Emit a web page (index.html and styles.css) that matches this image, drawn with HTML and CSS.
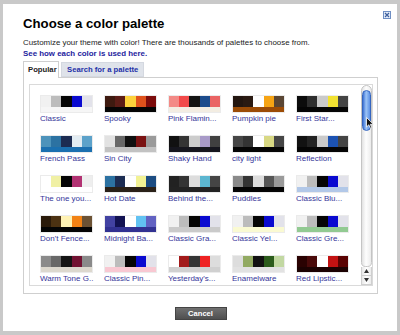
FILE: index.html
```html
<!DOCTYPE html>
<html lang="en">
<head>
  <meta charset="UTF-8">
  <meta name="viewport" content="width=device-width, initial-scale=1.0">
  <title>Choose a color palette</title>
  <link rel="stylesheet" href="styles.css">
</head>
<body>
  <div class="dialog">
    <div class="header">
      <h1 class="title">Choose a color palette</h1>
      <a class="close" href="#" title="Close">
        <svg width="8" height="8" viewBox="0 0 8 8">
          <rect x="0.5" y="0.5" width="7" height="7" fill="#e4ecf8" stroke="#6f8fc4"/>
          <path d="M2 2 L6 6 M6 2 L2 6" stroke="#3d5f9e" stroke-width="1.2"/>
        </svg>
      </a>
    </div>

    <p class="intro">
      Customize your theme with color! There are thousands of palettes to choose from.<br>
      <a href="#">See how each color is used here.</a>
    </p>

    <div class="tabs">
      <span class="tab active">Popular</span>
      <a class="tab" href="#">Search for a palette</a>
    </div>

    <div class="panel">
      <div class="list">
        <div class="grid" id="paletteGrid"></div>
        <div class="scrollbar">
          <div class="track"><div class="thumb"></div></div>
          <div class="arrow">
            <svg width="5" height="4" viewBox="0 0 5 4"><path d="M2.5 0 L5 4 L0 4 Z" fill="#333"/></svg>
          </div>
          <div class="arrow">
            <svg width="5" height="4" viewBox="0 0 5 4"><path d="M0 0 L5 0 L2.5 4 Z" fill="#333"/></svg>
          </div>
          <svg class="cursor" width="8" height="12" viewBox="0 0 8 12">
            <path d="M0.5 0.5 L0.5 10 L2.8 7.8 L4.4 11.3 L5.8 10.7 L4.3 7.3 L7.4 7.3 Z" fill="#111" stroke="#fff" stroke-width="0.8"/>
          </svg>
        </div>
      </div>
    </div>

    <div class="actions">
      <button class="cancel">Cancel</button>
    </div>
  </div>

  <script>
    const palettes = [
      ["Classic", ["#f1f1f1", "#bcbcbc", "#050505", "#0a0ad0", "#e2e2ea"], "#f6f6f6"],
      ["Spooky", ["#3e1a10", "#5c1c16", "#fdd23c", "#df521c", "#7c0c0c"], "#050505"],
      ["Pink Flamin...", ["#f38a86", "#f24a4a", "#141414", "#1d4c8c", "#ea6464"], "#f3ede2"],
      ["Pumpkin pie", ["#231610", "#2a1a12", "#ffffff", "#f6a414", "#5a4634"], "#9c4c06"],
      ["First Star...", ["#0c0c0c", "#2e2e2e", "#cacaca", "#f2e232", "#444444"], "#050505"],

      ["French Pass", ["#4d93bb", "#2c72a2", "#1c2c52", "#e2ecf2", "#5ca2ca"], "#1b70b0"],
      ["Sin City", ["#e2e2e2", "#686868", "#101010", "#7a1212", "#9a9a9a"], "#c2c2c2"],
      ["Shaky Hand", ["#111111", "#343434", "#cccccc", "#a89ac8", "#404040"], "#16161e"],
      ["city light", ["#464646", "#343434", "#ffffff", "#d8d884", "#464646"], "#050505"],
      ["Reflection", ["#121212", "#232323", "#cacaca", "#1c52b2", "#444444"], "#050505"],

      ["The one you...", ["#ffffff", "#f0f0a4", "#050505", "#b23272", "#eeeeee"], "#ffffff"],
      ["Hot Date", ["#2c72a2", "#1c2c52", "#ffffff", "#f2f294", "#1c4c82"], "#2a2118"],
      ["Behind the...", ["#222222", "#343434", "#dddddd", "#5cb6d0", "#454545"], "#232323"],
      ["Puddles", ["#8a8a8a", "#343434", "#dddddd", "#565656", "#9a9a9a"], "#050505"],
      ["Classic Blu...", ["#f1f1f1", "#bcbcbc", "#050505", "#0a0ad0", "#e2e2ea"], "#b2c8e8"],

      ["Don't Fence...", ["#2a1a0a", "#4c3212", "#fff2b4", "#f28214", "#6c5234"], "#050505"],
      ["Midnight Ba...", ["#4242a2", "#121252", "#ffffff", "#62c2f2", "#6262c2"], "#323292"],
      ["Classic Gra...", ["#f1f1f1", "#bcbcbc", "#050505", "#0a0ad0", "#e2e2ea"], "#cacaca"],
      ["Classic Yel...", ["#f1f1f1", "#bcbcbc", "#050505", "#0a0ad0", "#e2e2ea"], "#fafad2"],
      ["Classic Gre...", ["#f1f1f1", "#bcbcbc", "#050505", "#0a0ad0", "#e2e2ea"], "#92ca92"],

      ["Warm Tone G..", ["#8a8a8a", "#686868", "#141414", "#721232", "#8a8a8a"], "#dcd8ce"],
      ["Classic Pin...", ["#f1f1f1", "#bcbcbc", "#050505", "#0a0ad0", "#e2e2ea"], "#f8c8d2"],
      ["Yesterday's...", ["#ffffff", "#a21a1a", "#343434", "#ee2222", "#dddddd"], "#d0d0d0"],
      ["Enamelware", ["#dddddd", "#92aa62", "#121212", "#2c5c1c", "#c2d8a2"], "#e2e2e2"],
      ["Red Lipstic...", ["#2a0202", "#4a0a0a", "#ffffff", "#c21212", "#5a0202"], "#1c0202"]
    ];

    const grid = document.getElementById("paletteGrid");

    palettes.forEach(function (p) {
      const item = document.createElement("a");
      item.className = "palette";
      item.href = "#";

      const swatch = document.createElement("div");
      swatch.className = "swatch";

      const top = document.createElement("div");
      top.className = "swatch-top";
      p[1].forEach(function (color) {
        const block = document.createElement("span");
        block.style.background = color;
        top.appendChild(block);
      });

      const base = document.createElement("div");
      base.className = "swatch-base";
      base.style.background = p[2];

      swatch.appendChild(top);
      swatch.appendChild(base);

      const label = document.createElement("span");
      label.className = "palette-name";
      label.textContent = p[0];

      item.appendChild(swatch);
      item.appendChild(label);
      grid.appendChild(item);
    });
  </script>
</body>
</html>
```

FILE: styles.css
```css
* {
  box-sizing: border-box;
}
body {
  margin: 0;
  font-family: "Liberation Sans", Arial, sans-serif;
  background-color: #c9c9c9;
}
.dialog {
  width: 400px;
  height: 335px;
  background-color: #fff;
  border-style: solid;
  border-color: #c9c9c9;
  border-width: 4px 3px 4px 3px;
  padding: 0 6px 0 20px;
}
.header {
  display: flex;
  justify-content: space-between;
  align-items: flex-start;
}
.title {
  margin: 12px 0 0 0;
  font-size: 13.2px;
  line-height: 16px;
  font-weight: bold;
  color: #000;
}
.close {
  display: block;
  width: 8px;
  height: 8px;
  margin-top: 7px;
}
.close svg {
  display: block;
}
.intro {
  margin: 5px 13px 0 0;
  font-size: 7.9px;
  line-height: 11px;
  color: #222;
}
.intro a {
  color: #1d1d9e;
  font-weight: bold;
  text-decoration: none;
}
.tabs {
  display: flex;
  margin: 2px 13px -1px 0;
  height: 17px;
  position: relative;
  z-index: 1;
}
.tab {
  font-size: 7.7px;
  font-weight: bold;
  line-height: 14px;
  white-space: nowrap;
  text-decoration: none;
}
.tab.active {
  width: 36px;
  height: 17px;
  padding: 1px 0 0 4px;
  background-color: #fff;
  color: #222;
  border: 1px solid #cfcfcf;
  border-bottom: none;
}
.tab:not(.active) {
  width: 83px;
  height: 15px;
  margin: 1px 0 0 2px;
  padding-left: 5px;
  background-color: #dfe3ea;
  border: 1px solid #d4d8e0;
  color: #2431a8;
}
.panel {
  margin-right: 13px;
  border: 1px solid #cfcfcf;
  padding: 6px 4px 7px 5px;
  height: 217px;
}
.list {
  display: flex;
  height: 202px;
  border: 1px solid #dadada;
}
.grid {
  flex: 1;
  display: grid;
  grid-template-columns: repeat(5, 53px);
  column-gap: 11px;
  row-gap: 11px;
  align-content: start;
  padding: 10px 0 0 10px;
  overflow: hidden;
}
.palette {
  display: block;
  text-decoration: none;
}
.swatch {
  width: 53px;
  height: 18px;
  display: flex;
  flex-direction: column;
  border: 1px solid rgba(0, 0, 0, 0.08);
}
.swatch-top {
  display: flex;
  height: 11px;
}
.swatch-top span {
  flex: 1;
}
.swatch-base {
  flex: 1;
}
.palette-name {
  display: block;
  margin-top: 1px;
  font-size: 8px;
  line-height: 10px;
  color: #35359a;
  white-space: nowrap;
}
.scrollbar {
  position: relative;
  width: 11px;
  display: flex;
  flex-direction: column;
  background-color: #fff;
}
.track {
  flex: 1;
  border: 1px solid #c4c4c4;
  border-radius: 6px 6px 5px 5px;
  background: linear-gradient(to right, #e2e2e2, #fdfdfd 45%, #ececec);
  padding: 4px 0 0 0;
}
.thumb {
  height: 41px;
  border: 1px solid #3566c0;
  border-radius: 5px;
  background: linear-gradient(to right, #3e72d4, #9cc4f6 45%, #5b8fe4);
}
.arrow {
  height: 9px;
  display: flex;
  align-items: center;
  justify-content: center;
  border-left: 1px solid #cfcfcf;
  border-right: 1px solid #cfcfcf;
  border-bottom: 1px solid #cfcfcf;
  background: linear-gradient(to right, #e8e8e8, #fff 50%, #ececec);
}
.arrow svg {
  display: block;
}
.cursor {
  position: absolute;
  left: 5px;
  top: 32px;
}
.actions {
  margin-right: 13px;
  margin-top: 13px;
  display: flex;
  justify-content: center;
}
.cancel {
  width: 52px;
  height: 13px;
  padding: 0;
  border: 1px solid #444;
  background: linear-gradient(#707070, #4f4f4f);
  color: #fff;
  font-family: "Liberation Sans", Arial, sans-serif;
  font-size: 7.6px;
  font-weight: bold;
  line-height: 11px;
}
```
